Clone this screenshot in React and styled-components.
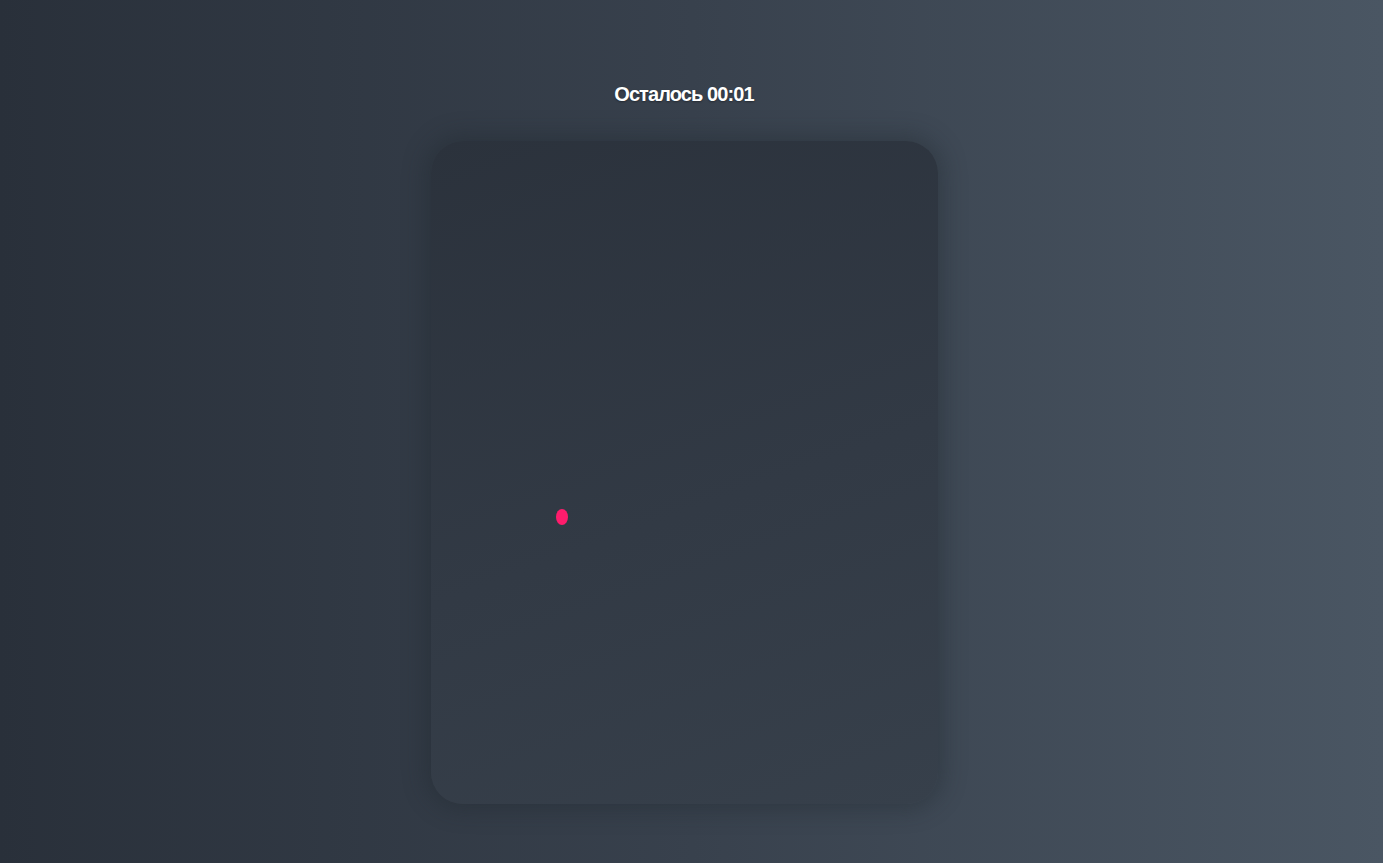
import React from 'react';
import styled, { createGlobalStyle } from 'styled-components';

const Global = createGlobalStyle`
  html, body {
    margin: 0;
    height: 100%;
  }
  body {
    background: linear-gradient(90deg, #29303a 0%, #38414d 50%, #4a5663 100%);
    font-family: "Liberation Sans", Arial, sans-serif;
    overflow: hidden;
  }
`;

// Весь экран игры
const Screen = styled.div`
  width: 1368px;
  min-height: 863px;
  display: flex;
  flex-direction: column;
  align-items: center;
  padding-top: 83px;
  box-sizing: border-box;
`;

// Таймер сверху
const Timer = styled.h1`
  margin: 0 0 36px;
  color: #ffffff;
  font-size: 20px;
  font-weight: 700;
  letter-spacing: -0.9px;
  line-height: 22px;
  text-shadow: 0 1px 2px rgba(0, 0, 0, 0.35);
`;

// Игровое поле
const Field = styled.div`
  position: relative;
  width: 507px;
  height: 663px;
  border-radius: 32px;
  background: linear-gradient(160deg, #2b323c 0%, #323a45 55%, #37404b 100%);
  box-shadow: 0 0 22px 6px rgba(30, 36, 44, 0.35);
  overflow: hidden;
`;

// Цель, по которой нужно кликнуть
const Target = styled.div`
  position: absolute;
  width: 12px;
  height: 16px;
  border-radius: 50%;
  background: #ff1c6c;
  cursor: pointer;
`;

const App = () => {
  const target = { x: 125, y: 368 };

  return (
    <>
      <Global />
      <Screen>
        <Timer>Осталось 00:01</Timer>
        <Field>
          <Target style={{ left: target.x, top: target.y }} />
        </Field>
      </Screen>
    </>
  );
};

export default App;
